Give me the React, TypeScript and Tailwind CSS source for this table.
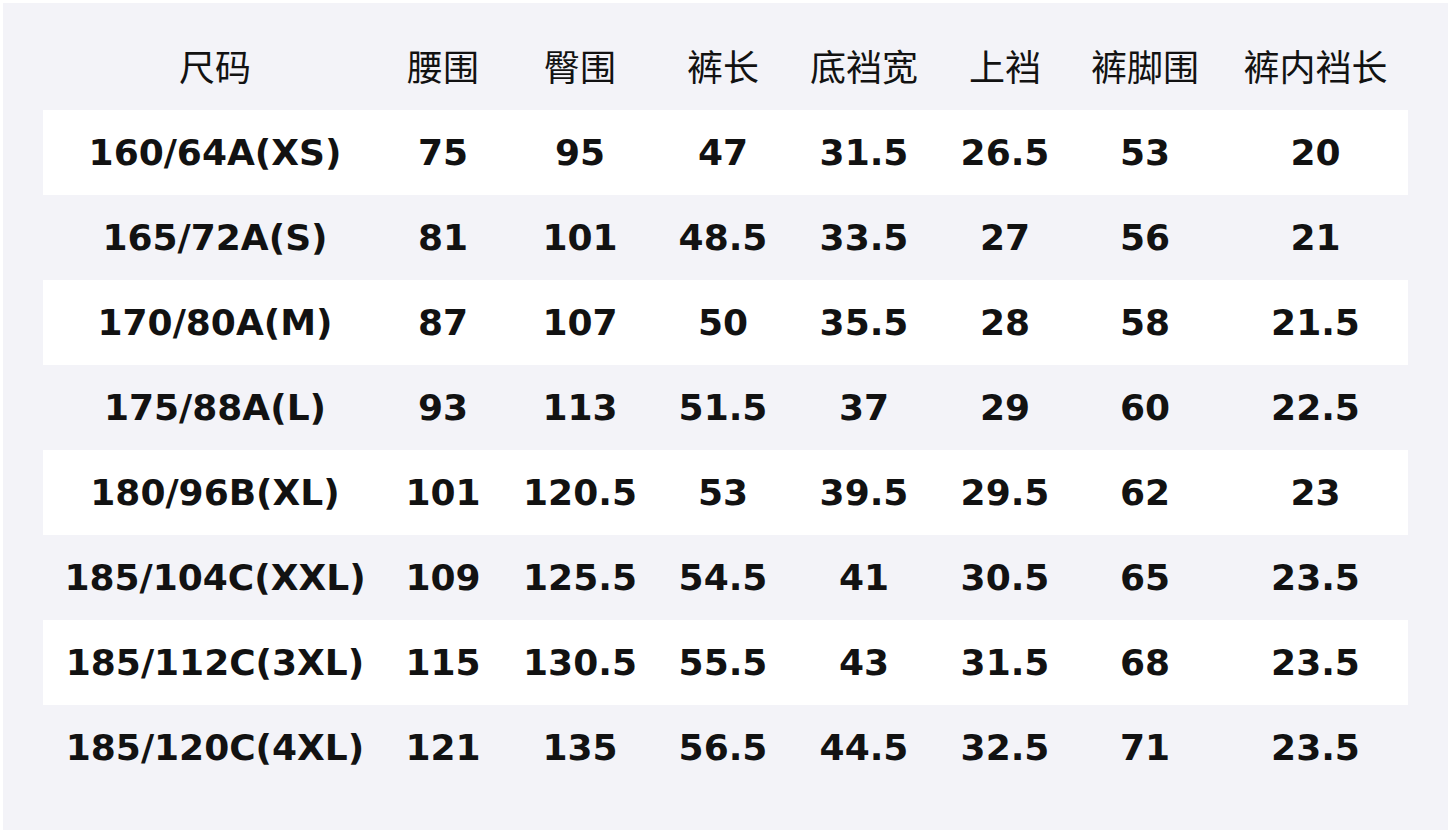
const headers = ['尺码', '腰围', '臀围', '裤长', '底裆宽', '上裆', '裤脚围', '裤内裆长'];

const rows = [
  ['160/64A(XS)', '75', '95', '47', '31.5', '26.5', '53', '20'],
  ['165/72A(S)', '81', '101', '48.5', '33.5', '27', '56', '21'],
  ['170/80A(M)', '87', '107', '50', '35.5', '28', '58', '21.5'],
  ['175/88A(L)', '93', '113', '51.5', '37', '29', '60', '22.5'],
  ['180/96B(XL)', '101', '120.5', '53', '39.5', '29.5', '62', '23'],
  ['185/104C(XXL)', '109', '125.5', '54.5', '41', '30.5', '65', '23.5'],
  ['185/112C(3XL)', '115', '130.5', '55.5', '43', '31.5', '68', '23.5'],
  ['185/120C(4XL)', '121', '135', '56.5', '44.5', '32.5', '71', '23.5'],
];

const cols = 'grid grid-cols-[344px_112px_162px_124px_158px_124px_156px_185px]';

export default function App() {
  return (
    <div className="w-[1451px] h-[833px] bg-white p-[3px]">
      <div className="h-full bg-[#f3f3f8] px-10 pt-[22px] text-[#121212]">
        <div className={`${cols} h-[85px] items-center pb-[5px] text-[36px] font-normal`} style={{ fontFamily: '"Noto Sans CJK SC", "Noto Sans", sans-serif' }}>
          {headers.map((h) => (
            <div key={h} className="text-center">{h}</div>
          ))}
        </div>
        {rows.map((r, i) => (
          <div
            key={i}
            className={`${cols} h-[85px] items-center text-[36px] font-bold ${i % 2 === 0 ? 'bg-white' : ''}`}
            style={{ fontFamily: '"DejaVu Sans", sans-serif' }}
          >
            {r.map((c, j) => (
              <div key={j} className="text-center whitespace-nowrap">{c}</div>
            ))}
          </div>
        ))}
      </div>
    </div>
  );
}
